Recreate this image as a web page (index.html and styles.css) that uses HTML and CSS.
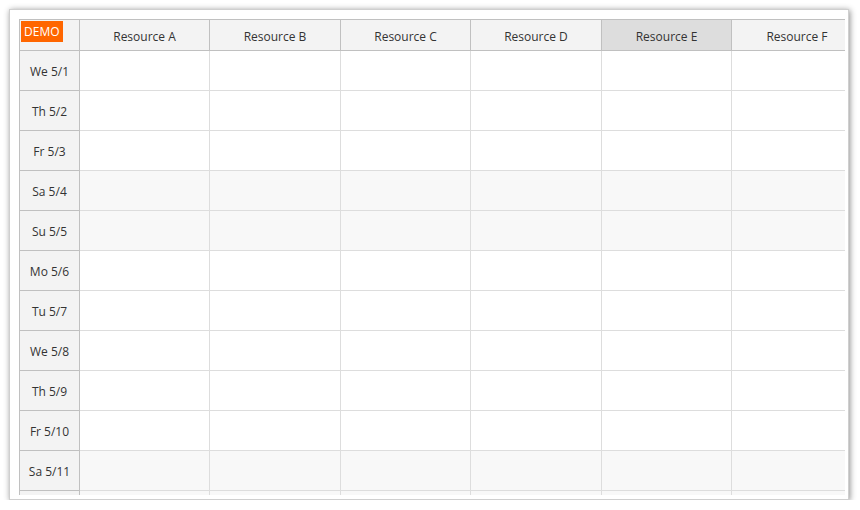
FILE: index.html
```html
<!DOCTYPE html>
<html>
<head>
<meta charset="utf-8">
<link rel="stylesheet" href="styles.css">
</head>
<body>
<div class="frame">
  <div class="viewport">
    <div class="cal">
      <div class="corner"><span class="demo">DEMO</span></div>
      <div class="colh">Resource A</div>
      <div class="colh">Resource B</div>
      <div class="colh">Resource C</div>
      <div class="colh">Resource D</div>
      <div class="colh hover">Resource E</div>
      <div class="colh">Resource F</div>
    </div>
    <div class="cal" id="rows"></div>
  </div>
</div>
<script src="app.js"></script>
</body>
</html>
```
FILE: app.js
```js
const days = [
  ["We 5/1", false], ["Th 5/2", false], ["Fr 5/3", false], ["Sa 5/4", true],
  ["Su 5/5", true], ["Mo 5/6", false], ["Tu 5/7", false], ["We 5/8", false],
  ["Th 5/9", false], ["Fr 5/10", false], ["Sa 5/11", true], ["", true]
];
const rows = document.getElementById("rows");
for (const [label, weekend] of days) {
  const h = document.createElement("div");
  h.className = "rowh";
  h.textContent = label;
  rows.appendChild(h);
  for (let i = 0; i < 6; i++) {
    const c = document.createElement("div");
    c.className = weekend ? "cell weekend" : "cell";
    rows.appendChild(c);
  }
}
```
FILE: styles.css
```css
html, body {
  margin: 0;
  padding: 0;
  background: #ffffff;
}
body {
  font-family: "Open Sans", "Noto Sans", sans-serif;
  font-size: 12px;
  color: #333333;
}
.frame {
  margin: 9px 0 0 9px;
  width: 840px;
  height: 491px;
  border: 1px solid #cfcfcf;
  box-shadow: 1px 1px 6px rgba(0, 0, 0, 0.45);
  background: #ffffff;
  padding: 9px 5px 5px 9px;
  box-sizing: border-box;
}
.viewport {
  width: 826px;
  height: 476px;
  overflow: hidden;
  border-left: 1px solid #c0c0c0;
  border-top: 1px solid #c0c0c0;
  box-sizing: border-box;
}
.cal {
  display: grid;
  grid-template-columns: 60px 130px 131px 130px 131px 130px 131px;
  width: 843px;
}
.corner, .colh {
  height: 31px;
  background: #f3f3f3;
  border-right: 1px solid #c0c0c0;
  border-bottom: 1px solid #c0c0c0;
  box-sizing: border-box;
}
.corner {
  padding: 1px 0 0 1px;
}
.demo {
  display: inline-block;
  background: #ff6600;
  color: #ffffff;
  font-size: 12px;
  line-height: 21px;
  height: 21px;
  padding: 0 3px;
}
.colh {
  display: flex;
  align-items: center;
  justify-content: center;
  padding-top: 2px;
}
.colh.hover {
  background: #dddddd;
}
.rowh {
  height: 40px;
  background: #f3f3f3;
  border-right: 1px solid #c0c0c0;
  border-bottom: 1px solid #c0c0c0;
  box-sizing: border-box;
  display: flex;
  align-items: center;
  justify-content: center;
  padding-top: 1px;
}
.cell {
  height: 40px;
  background: #ffffff;
  border-right: 1px solid #dddddd;
  border-bottom: 1px solid #dddddd;
  box-sizing: border-box;
}
.cell.weekend {
  background: #f8f8f8;
}
```
